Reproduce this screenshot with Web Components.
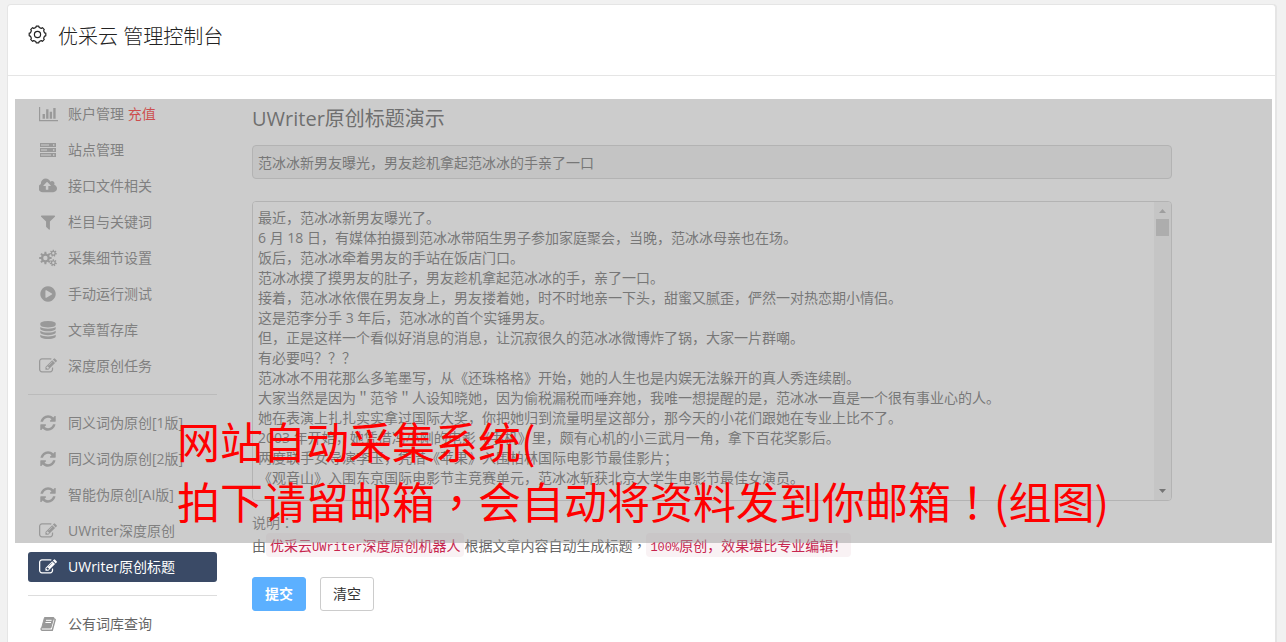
<!DOCTYPE html>
<html lang="zh-CN">
<head>
<meta charset="utf-8">
<title>优采云 管理控制台</title>
<style>
  body {
    margin: 0;
    background: #f1f1f1;
    color: #666;
    font: 14px/20px "Open Sans", "Noto Sans CJK SC", sans-serif;
  }
</style>
</head>
<body>
<console-card>
  <ui-icon slot="icon" name="gear"></ui-icon>
  <span slot="title">优采云 管理控制台</span>
  <side-nav slot="nav">
    <nav-item icon="chart">账户管理 <pay-link>充值</pay-link></nav-item>
    <nav-item icon="server">站点管理</nav-item>
    <nav-item icon="cloud">接口文件相关</nav-item>
    <nav-item icon="filter">栏目与关键词</nav-item>
    <nav-item icon="cogs">采集细节设置</nav-item>
    <nav-item icon="play">手动运行测试</nav-item>
    <nav-item icon="database">文章暂存库</nav-item>
    <nav-item icon="edit">深度原创任务</nav-item>
    <nav-divider></nav-divider>
    <nav-item icon="refresh">同义词伪原创[1版]</nav-item>
    <nav-item icon="refresh">同义词伪原创[2版]</nav-item>
    <nav-item icon="refresh">智能伪原创[AI版]</nav-item>
    <nav-item icon="edit">UWriter深度原创</nav-item>
    <nav-item icon="edit" active>UWriter原创标题</nav-item>
    <nav-divider></nav-divider>
    <nav-item icon="book">公有词库查询</nav-item>
  </side-nav>
  <title-form></title-form>
  <banner-overlay slot="overlay">网站自动采集系统(<br>拍下请留邮箱<mid-mark lang="zh-TW">，</mid-mark>会自动将资料发到你邮箱<mid-mark lang="zh-TW">！</mid-mark>(组图)</banner-overlay>
</console-card>

<script>
const define = (name, html) => customElements.define(name, class extends HTMLElement {
  constructor() {
    super();
    this.attachShadow({ mode: "open" }).innerHTML = html;
  }
});

/* Closed outline of a cog, centred on cx, cy */
function cog(cx, cy, outer, inner, teeth) {
  const step = Math.PI * 2 / teeth;
  const at = (r, a) => (cx + r * Math.cos(a)).toFixed(2) + " " + (cy + r * Math.sin(a)).toFixed(2);
  let d = "";
  for (let i = 0; i < teeth; i++) {
    const a = i * step - Math.PI / 2;
    d += (i ? "L" : "M") + at(inner, a - step * .3) + "L" + at(outer, a - step * .2) +
         "L" + at(outer, a + step * .2) + "L" + at(inner, a + step * .3);
  }
  return d + "Z";
}
const hole = (cx, cy, r) => `M${cx - r} ${cy}a${r} ${r} 0 1 0 ${2 * r} 0a${r} ${r} 0 1 0 ${-2 * r} 0Z`;
const fa = (d, w = 1792) => `<svg viewBox="0 0 ${w} 1792" width="${w > 1900 ? 19 : 18}" height="18"><path d="${d}"/></svg>`;

const ICONS = {
  gear: `<svg viewBox="0 0 20 20" width="20" height="20" fill="none" stroke="currentColor" stroke-width="1.2" stroke-linejoin="round"><path d="${cog(9.5, 9.5, 8.4, 7.2, 8)}"/><circle cx="9.5" cy="9.5" r="3.1"/></svg>`,
  chart: fa("M640 896v512h-256v-512h256zm384-512v1024h-256v-1024h256zm1024 1152v128h-2048v-1536h128v1408h1920zm-640-896v768h-256v-768h256zm384-384v1152h-256v-1152h256z", 2048),
  server: `<svg viewBox="0 0 18 18" width="18" height="18" fill-rule="evenodd"><path d="M1 2h16v4H1ZM2 3.6v.8h8v-.8ZM14 3.3v1.4h1.4V3.3ZM1 7h16v4H1ZM2 8.6v.8h6v-.8ZM14 8.3v1.4h1.4V8.3ZM1 12h16v4H1ZM2 13.6v.8h10v-.8ZM14 13.3v1.4h1.4v-1.4Z"/></svg>`,
  cloud: fa("M1216 864q0-14-9-23l-352-352q-9-9-23-9t-23 9l-351 351q-10 12-10 24 0 14 9 23t23 9h224v352q0 13 9.5 22.5t22.5 9.5h192q13 0 22.5-9.5t9.5-22.5v-352h224q13 0 22.5-9.5t9.5-22.5zm640 288q0 159-112.5 271.5t-271.5 112.5h-1088q-185 0-316.5-131.5t-131.5-316.5q0-130 70-240t188-165q-2-30-2-43 0-212 150-362t362-150q156 0 285.5 87t188.5 231q71-62 166-62 106 0 181 75t75 181q0 76-41 138 130 31 213.5 135.5t83.5 238.5z", 1856),
  filter: fa("M1595 295q17 41-14 70l-493 493v742q0 42-39 59-13 5-25 5-27 0-45-19l-256-256q-19-19-19-45v-486l-493-493q-31-29-14-70 17-39 59-39h1280q42 0 59 39z"),
  cogs: `<svg viewBox="0 0 18 18" width="18" height="18" fill-rule="evenodd"><path d="${cog(6.4, 9, 6.3, 4.5, 8)}${hole(6.4, 9, 2.2)}${cog(14.3, 4.2, 3.6, 2.5, 7)}${hole(14.3, 4.2, 1.2)}${cog(14.3, 13.8, 3.6, 2.5, 7)}${hole(14.3, 13.8, 1.2)}"/></svg>`,
  play: fa("M896 128q209 0 385.5 103t279.5 279.5 103 385.5-103 385.5-279.5 279.5-385.5 103-385.5-103-279.5-279.5-103-385.5 103-385.5 279.5-279.5 385.5-103zm384 823q32-18 32-55t-32-55l-544-320q-31-19-64-1-32 19-32 56v640q0 37 32 56 16 8 32 8 17 0 32-9z"),
  database: fa("M896 768q237 0 443-43t325-127v170q0 69-103 128t-280 93.5-385 34.5-385-34.5-280-93.5-103-128v-170q119 84 325 127t443 43zm0 768q237 0 443-43t325-127v170q0 69-103 128t-280 93.5-385 34.5-385-34.5-280-93.5-103-128v-170q119 84 325 127t443 43zm0-384q237 0 443-43t325-127v170q0 69-103 128t-280 93.5-385 34.5-385-34.5-280-93.5-103-128v-170q119 84 325 127t443 43zm0-1152q208 0 385 34.5t280 93.5 103 128v128q0 69-103 128t-280 93.5-385 34.5-385-34.5-280-93.5-103-128v-128q0-69 103-128t280-93.5 385-34.5z"),
  edit: fa("M888 1184l116-116-152-152-116 116v56h96v96h56zm440-720q-16-16-33 1l-350 350q-17 17-1 33t33-1l350-350q17-17 1-33zm80 594v190q0 119-84.5 203.5t-203.5 84.5h-832q-119 0-203.5-84.5t-84.5-203.5v-832q0-119 84.5-203.5t203.5-84.5h832q63 0 117 25 15 7 18 23 3 17-9 29l-49 49q-14 14-32 8-23-6-45-6h-832q-66 0-113 47t-47 113v832q0 66 47 113t113 47h832q66 0 113-47t47-113v-126q0-13 9-22l64-64q15-15 35-7t20 29zm-96-738l288 288-672 672h-288v-288zm444 132l-92 92-288-288 92-92q28-28 68-28t68 28l152 152q28 28 28 68t-28 68z"),
  refresh: fa("M1639 1056q0 5-1 7-64 268-268 434.5t-478 166.5q-146 0-282.5-55t-243.5-157l-129 129q-19 19-45 19t-45-19-19-45v-448q0-26 19-45t45-19h448q26 0 45 19t19 45-19 45l-137 137q71 66 161 102t187 36q134 0 250-65t186-179q11-17 53-117 8-23 30-23h192q13 0 22.5 9.5t9.5 22.5zm25-800v448q0 26-19 45t-45 19h-448q-26 0-45-19t-19-45 19-45l138-138q-148-137-349-137-134 0-250 65t-186 179q-11 17-53 117-8 23-30 23h-199q-13 0-22.5-9.5t-9.5-22.5v-7q65-268 270-434.5t480-166.5q146 0 284 55.5t245 156.5l130-129q19-19 45-19t45 19 19 45z"),
  book: `<svg viewBox="0 0 18 18" width="18" height="18" fill="none" stroke="currentColor" stroke-linejoin="round"><path fill="currentColor" d="M5.5 2.5h9.3L11.8 13H2.6Z"/><path stroke-width="1.4" d="M15 3.6l1.2.9-2.9 10.8H3.4Q1.6 15.2 2.3 13"/><path stroke="#fff" d="M7 5.3h5.6M6.4 7.5H12"/></svg>`
};

customElements.define("ui-icon", class extends HTMLElement {
  constructor() { super(); this.attachShadow({ mode: "open" }); }
  connectedCallback() {
    this.shadowRoot.innerHTML = `<style>:host{display:flex;align-items:center;justify-content:center;width:20px;height:20px}svg{display:block;fill:currentColor}svg[fill=none]{fill:none}</style>${ICONS[this.getAttribute("name")]}`;
  }
});

customElements.define("nav-item", class extends HTMLElement {
  constructor() { super(); this.attachShadow({ mode: "open" }); }
  connectedCallback() {
    this.shadowRoot.innerHTML = `
      <style>
        :host { display: block; }
        a { display: flex; align-items: center; gap: 10px; height: 30px; padding-left: 10px;
            border-radius: 3px; color: #666; text-decoration: none; white-space: nowrap; }
        ui-icon { color: #999; }
        :host([active]) a { background: #3a4a66; color: #fff; }
        :host([active]) ui-icon { color: #fff; }
      </style>
      <a href="#"><ui-icon name="${this.getAttribute("icon")}"></ui-icon><span><slot></slot></span></a>`;
  }
});

define("pay-link", `<style>:host{color:#f00}</style><slot></slot>`);
define("mid-mark", `<style>:host{font-family:"Noto Sans CJK TC",sans-serif}</style><slot></slot>`);
define("nav-divider", `<style>:host{display:block;height:1px;margin:7px 0;background:#ddd}</style>`);
define("side-nav", `<style>:host{display:block}nav{display:flex;flex-direction:column;gap:6px}</style><nav><slot></slot></nav>`);

define("console-card", `
  <style>
    :host { display: flex; height: 100vh; box-sizing: border-box; padding: 4px 10px 0 7px; overflow: hidden; }
    section { flex: 1; background: #fff; border: 1px solid #e5e5e5; border-bottom: 0; border-radius: 4px 4px 0 0;
              box-shadow: 1px 0 0 #e5e5e5; min-width: 0; }
    header { display: flex; align-items: center; gap: 10px; height: 60px; padding: 0 20px 10px;
             border-bottom: 1px solid #e5e5e5; color: #222; }
    h1 { margin: 0; padding-top: 3px; font-size: 20px; line-height: 30px; font-weight: 300; }
    .body { position: relative; display: grid; grid-template-columns: 189px minmax(0, 920px); gap: 35px; padding: 23px 20px; }
  </style>
  <section>
    <header><slot name="icon"></slot><h1><slot name="title"></slot></h1></header>
    <div class="body"><slot name="nav"></slot><slot></slot><slot name="overlay"></slot></div>
  </section>`);

define("scroll-rail", `
  <style>
    :host { display: flex; flex-direction: column; align-items: center; width: 17px; background: #f1f1f1; }
    svg { display: block; }
    i { width: 13px; height: 17px; background: #c1c1c1; margin-bottom: auto; }
  </style>
  <svg width="17" height="17"><path d="M5 11h7L8.5 7Z" fill="#a3a3a3"/></svg>
  <i></i>
  <svg width="17" height="17"><path d="M5 6h7L8.5 10Z" fill="#505050"/></svg>`);

define("title-form", `
  <style>
    :host { display: block; }
    form { display: flex; flex-direction: column; }
    h2 { margin: 0 0 6px; font-size: 20px; line-height: 40px; font-weight: 400; color: #444; }
    input, .area { box-sizing: border-box; width: 100%; border: 1px solid #ccc; border-radius: 4px; }
    input { height: 34px; padding: 0 5px; background: #eee; }
    input, textarea, button { font: inherit; color: #555; }
    .area { display: flex; height: 300px; margin: 22px 0 10px; overflow: hidden; }
    textarea { flex: 1; border: 0; margin: 0; padding: 6px 5px; resize: none; overflow: hidden; outline: 0; background: #fff; white-space: pre-wrap; }
    p { margin: 0; height: 23px; line-height: 23px; white-space: nowrap; }
    code { padding: 2px 4px; border-radius: 4px; background: #f9f2f4; color: #c7254e; font: 14px/16px "Noto Sans CJK SC", sans-serif; }
    kbd { font: 12px/16px "Liberation Mono", monospace; }
    .mark { font-family: "Noto Sans CJK TC", sans-serif; }
    .actions { display: flex; gap: 14px; margin-top: 20px; }
    button { width: 54px; height: 34px; padding: 0; border: 1px solid #ccc; border-radius: 3px; background: #fff; color: #333; }
    .primary { background: #5cb0ff; border-color: #5cb0ff; color: #fff; font-weight: 600; }
  </style>
  <form>
    <h2>UWriter原创标题演示</h2>
    <input type="text" aria-label="标题" readonly value="范冰冰新男友曝光，男友趁机拿起范冰冰的手亲了一口">
    <div class="area"><textarea aria-label="文章内容">最近，范冰冰新男友曝光了。
6 月 18 日，有媒体拍摄到范冰冰带陌生男子参加家庭聚会，当晚，范冰冰母亲也在场。
饭后，范冰冰牵着男友的手站在饭店门口。
范冰冰摸了摸男友的肚子，男友趁机拿起范冰冰的手，亲了一口。
接着，范冰冰依偎在男友身上，男友搂着她，时不时地亲一下头，甜蜜又腻歪，俨然一对热恋期小情侣。
这是范李分手 3 年后，范冰冰的首个实锤男友。
但，正是这样一个看似好消息的消息，让沉寂很久的范冰冰微博炸了锅，大家一片群嘲。
有必要吗？？？
范冰冰不用花那么多笔墨写，从《还珠格格》开始，她的人生也是内娱无法躲开的真人秀连续剧。
大家当然是因为＂范爷＂人设知晓她，因为偷税漏税而唾弃她，我唯一想提醒的是，范冰冰一直是一个很有事业心的人。
她在表演上扎扎实实拿过国际大奖，你把她归到流量明星这部分，那今天的小花们跟她在专业上比不了。
2003 年开始，她凭借冯小刚的电影《手机》里，颇有心机的小三武月一角，拿下百花奖影后。
两度联手女导演李玉，凭借《苹果》入围柏林国际电影节最佳影片；
《观音山》入围东京国际电影节主竞赛单元，范冰冰斩获北京大学生电影节最佳女演员。</textarea><scroll-rail></scroll-rail></div>
    <p>说明<span class="mark" lang="zh-TW">：</span></p>
    <p>由<code>优采云<kbd>UWriter</kbd>深度原创机器人</code>根据文章内容自动生成标题<span class="mark" lang="zh-TW">，</span><code><kbd>100%</kbd>原创，效果堪比专业编辑！</code></p>
    <div class="actions"><button type="button" class="primary">提交</button><button type="reset">清空</button></div>
  </form>`);

define("banner-overlay", `
  <style>
    :host { position: absolute; top: 23px; left: 7px; right: 3px; height: 444px; box-sizing: border-box;
            display: flex; align-items: flex-end; padding: 0 0 13px 162px; overflow: hidden;
            background: rgba(153, 153, 153, .5); color: #f00; font-family: "Noto Sans CJK SC", sans-serif;
            font-size: 43px; line-height: 60px; white-space: nowrap; pointer-events: none; }
  </style>
  <div><slot></slot></div>`);
</script>
</body>
</html>
